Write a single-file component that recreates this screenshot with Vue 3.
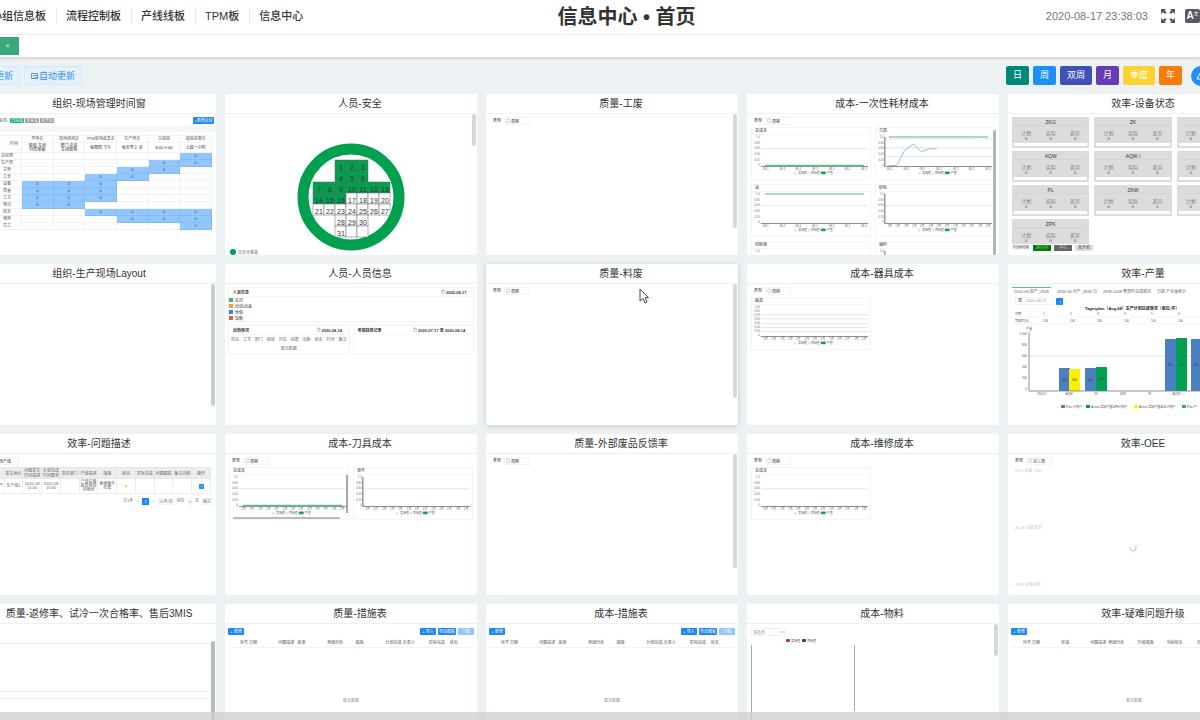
<script setup>
const nav = ['小组信息板', '流程控制板', '产线线板', 'TPM板', '信息中心']
const periods = [
  { text: '日', tone: 'teal' },
  { text: '周', tone: 'blue' },
  { text: '双周', tone: 'indigo' },
  { text: '月', tone: 'purple' },
  { text: '季度', tone: 'yellow' },
  { text: '年', tone: 'orange' }
]

const xs = (n, from = 14, to = 114) =>
  Array.from({ length: n }, (_, i) => Math.round(from + ((to - from) * i) / (n - 1)))
const chart = (title, o = {}) => ({
  title,
  n: 7,
  grid: [14],
  labels: ['1.0', '0.80', '0.60', '0.40', '0.20', '0'],
  axis: false,
  ...o
})

const cards = [
  { title: '组织-现场管理时间窗', kind: 'schedule' },
  { title: '人员-安全', kind: 'safety', bar: 'short' },
  { title: '质量-工废', kind: 'charts', charts: [], bar: 'long' },
  {
    title: '成本-一次性耗材成本',
    kind: 'charts',
    bar: 'dark',
    charts: [
      chart('总成本', { green: 31 }),
      chart('刀具', { green: 2, axis: true, grid: [4, 13, 22], line: '13,31 21,31 29,16 38,9 46,17 54,14 62,14' }),
      chart('油', { green: 2 }),
      chart('砂轮', { axis: true, n: 13 }),
      chart('切削液', {}),
      chart('辅料', { axis: true })
    ]
  },
  { title: '效率-设备状态', kind: 'status' },
  { title: '组织-生产现场Layout', kind: 'blank', bar: 'gray' },
  { title: '人员-人员信息', kind: 'people' },
  { title: '质量-料废', kind: 'charts', charts: [], bar: 'long', active: true },
  {
    title: '成本-器具成本',
    kind: 'charts',
    charts: [chart('器具', { n: 13, grid: [10, 14, 19, 23, 27], labels: ['1.00', '0.80', '0.70', '0.50', '0.40', '0.30', '0.10', '0'] })]
  },
  { title: '效率-产量', kind: 'output' },
  { title: '效率-问题描述', kind: 'issues' },
  {
    title: '成本-刀具成本',
    kind: 'charts',
    charts: [chart('总成本', { green: 31, n: 13, scroll: true }), chart('单件', { axis: true, n: 13 })]
  },
  { title: '质量-外部废品反馈率', kind: 'charts', charts: [], bar: 'long' },
  { title: '成本-维修成本', kind: 'charts', charts: [chart('总成本', { n: 13 })] },
  { title: '效率-OEE', kind: 'oee' },
  { title: '质量-返修率、试冷一次合格率、售后3MIS', kind: 'lines', bar: 'deep' },
  { title: '质量-措施表', kind: 'measures' },
  { title: '成本-措施表', kind: 'measures' },
  { title: '成本-物料', kind: 'material', bar: 'short' },
  { title: '效率-疑难问题升级', kind: 'upgrade' }
]

const slots = [
  ['早例会', '班组 车间<br>分层审核'],
  ['现场巡视会', '部门 会议<br>车间现场'],
  ['TPM现场改善会', '每周四 下午'],
  ['生产例会', '每天早上 会'],
  ['交接班', '8:00-9:00'],
  ['夜班巡查会', '上班一小时']
]
const shifts = [
  ['总经理', [6]],
  ['生产部', [5, 6]],
  ['主管', [4, 5]],
  ['工长', [3, 4]],
  ['设备', [1, 2, 3]],
  ['质量', [1, 2, 3]],
  ['工艺', [1, 2, 3]],
  ['物流', [1, 2]],
  ['班长', [3, 4, 5, 6]],
  ['维修', [4, 5, 6]],
  ['员工', [6]]
]

// calendar laid out as a cross: [row, first column, last column]
const days = []
let day = 1
for (const [r, a, b] of [[0, 2, 4], [1, 2, 4], [2, 0, 6], [3, 0, 6], [4, 0, 6], [5, 2, 4], [6, 2, 4]]) {
  for (let c = a; c <= b; c++, day++) {
    days.push({ x: 88 + c * 11, y: 46 + r * 11, n: day <= 31 ? day : '', done: day <= 16 })
  }
}

const machines = ['ZKG', 'ZK', 'ZKA', 'AQW', 'AQW I', 'AQ', 'PL', 'ZKW', 'PK', 'ZPK']
const people = [
  ['在岗', 'green'],
  ['培训/出差', 'amber'],
  ['休假', 'blue'],
  ['缺勤', 'red']
]
const roster = ['姓名', '工号', '部门', '班组', '岗位', '技能', '出勤', '状态', '时间', '备注']
const outputTabs = ['2020-08 班产_ZKW', 'ZKW 08-月产_ZKW 日', 'ZKW-2008 零部件达成情况', '日报 产出量统计']
const bars = [
  [51, 104, '#4a7fc1'], [61, 105, '#fff000'], [77, 104, '#4a7fc1'], [88, 103, '#00a04f'],
  [157, 75, '#4a7fc1'], [168, 74, '#00a04f'], [183, 75, '#4a7fc1'], [194, 74, '#00a04f']
]
const issueHead = ['序号', '项目', '发生地点', '问题发生时间描述', '计划完成时间要求', '责任部门', '产线描述', '措施', '状态', '实际完成', '问题跟踪', '备注内容', '操作']
const issueRow = ['1', '质量 生产', '生产线1', '2020-08 11:30', '2020-08 15:30', '-', '产线设备 报警停线 待维修', '更换备件 检查', '', '', '', '', '']
const measureCols = [[12, ''], [9, '序号'], [29, '日期'], [19, '问题描述'], [30, '来源'], [28, '原因分析'], [30, '措施'], [17, '计划完成'], [26, '负责人'], [21, '实际完成'], [24, '状态']]
const upgradeCols = [[12, ''], [9, '序号'], [29, '日期'], [29, '区域'], [18, '问题描述'], [29, '原因分析'], [29, '升级措施'], [30, '当前状态'], [30, '负责人'], [30, '备注']]
</script>

<template>
  <div class="page">
    <header class="top">
      <nav class="nav">
        <a v-for="n in nav" :key="n" href="#">{{ n }}</a>
      </nav>
      <h1>信息中心 • 首页</h1>
      <div class="tools">
        <time>2020-08-17 23:38:03</time>
        <button class="plain" aria-label="全屏">
          <svg width="14" height="14" viewBox="0 0 14 14" fill="#555">
            <path d="M0 0h5L3.600 1.400l2 2L4 5 2 3 0 5zM14 0v5l-2-2-2 2-1.600-1.600 2-2L9 0zM0 14V9l2 2 2-2 1.600 1.600-2 2L5 14zM14 14H9l1.400-1.400-2-2L10 9l2 2 2-2z" />
          </svg>
        </button>
        <button class="lang" aria-label="语言"><b>A</b><i>文</i></button>
      </div>
    </header>

    <div class="tabs"><button class="tab" aria-label="关闭">×</button></div>

    <main>
      <div class="bar">
        <div class="group">
          <button class="soft first">更新</button>
          <button class="soft">
            <svg width="8" height="8" viewBox="0 0 8 8" fill="none" stroke="#5b9bea"><path d="M.5 1.500h6v5h-6zM2 3.500h4M4 5.500h3.500" /></svg>自动更新
          </button>
        </div>
        <div class="group">
          <button v-for="p in periods" :key="p.text" class="period" :class="p.tone">{{ p.text }}</button>
          <button class="round" aria-label="提醒">
            <svg width="10" height="10" viewBox="0 0 10 10" fill="none" stroke="#fff"><path d="M1 8 4 2h2l3 6zM4 9.500h2" /></svg>
          </button>
        </div>
      </div>

      <div class="grid">
        <section v-for="c in cards" :key="c.title" class="card" :class="{ active: c.active }">
          <h2>{{ c.title }}</h2>
          <div class="body" :class="c.kind">
            <template v-if="c.kind === 'schedule'">
              <div class="marks">
                <span class="lead">时间标识:</span><b class="go">已完成</b><b>未完成</b><b>未开始</b>
                <button class="mini">+新增会议</button>
              </div>
              <table class="plan">
                <colgroup><col class="who"><col v-for="s in slots" :key="s[0]"></colgroup>
                <thead>
                  <tr><th rowspan="2" class="corner">时间</th><th v-for="s in slots" :key="s[0]">{{ s[0] }}</th></tr>
                  <tr class="tall"><th v-for="s in slots" :key="s[0]" v-html="s[1]"></th></tr>
                </thead>
                <tbody>
                  <tr v-for="s in shifts" :key="s[0]">
                    <th>{{ s[0] }}</th>
                    <td v-for="k in 6" :key="k" :class="{ on: s[1].includes(k) }">{{ s[1].includes(k) ? '0' : '' }}</td>
                  </tr>
                </tbody>
              </table>
            </template>

            <svg v-else-if="c.kind === 'safety'" class="fill" viewBox="0 0 252 142">
              <circle cx="126" cy="83" r="48" fill="#fff" stroke="#00a04f" stroke-width="11" />
              <g v-for="(d, i) in days" :key="i">
                <rect :x="d.x" :y="d.y" width="11" height="11" :fill="d.done ? '#00a04f' : '#fff'" stroke="#666" stroke-width=".5" />
                <text :x="d.x + 6" :y="d.y + 10" text-anchor="middle" font-size="7" fill="#333">{{ d.n }}</text>
              </g>
              <circle cx="8" cy="138" r="3" fill="#00a04f" />
              <text x="13" y="140" font-size="4" fill="#666">无安全事故</text>
            </svg>

            <template v-else-if="c.kind === 'charts'">
              <label class="filter">类型<input type="text" value="◎ 周期"></label>
              <div class="plots">
                <figure v-for="(g, gi) in c.charts" :key="gi">
                  <figcaption>{{ g.title }}</figcaption>
                  <svg class="fill" viewBox="0 0 120 44">
                    <path v-for="y in g.grid" :key="y" :d="`M9 ${y}H118`" stroke="#ddd" stroke-width=".8" />
                    <text v-for="(t, i) in g.labels" :key="i" x="8" :y="3 + (i * 29) / (g.labels.length - 1)" text-anchor="end" font-size="3" fill="#777">{{ t }}</text>
                    <path v-if="g.axis" d="M9 2V32" stroke="#666" />
                    <path d="M9 32H118" stroke="#888" />
                    <path v-if="g.green" :d="`M13 ${g.green}H114`" :stroke="g.green > 30 ? '#5fc08a' : '#8fd0a9'" stroke-width="1.500" />
                    <polyline v-if="g.line" :points="g.line" fill="none" stroke="#88c4e0" />
                    <text v-for="x in xs(g.n)" :key="x" :x="x" y="36" text-anchor="middle" font-size="3" fill="#666">{{ g.n > 7 ? '1月' : '08-1' }}</text>
                    <g font-size="3" fill="#555">
                      <circle cx="44" cy="39" r="1" fill="none" stroke="#9cd3b1" stroke-width=".5" /><text x="47" y="40">实际值</text>
                      <circle cx="58" cy="39" r="1" fill="none" stroke="#9ccbe3" stroke-width=".5" /><text x="60" y="40">目标值</text>
                      <rect x="70" y="37" width="5" height="3" rx="1" fill="#18a05c" /><text x="76" y="40">产值</text>
                    </g>
                  </svg>
                  <i v-if="g.scroll" class="vbar"></i><i v-if="g.scroll" class="hbar"></i>
                </figure>
              </div>
            </template>

            <template v-else-if="c.kind === 'status'">
              <div class="tiles">
                <div v-for="m in machines" :key="m" class="tile">
                  <h3>{{ m }}</h3>
                  <dl>
                    <div><dt>计划</dt><dd>0</dd></div>
                    <div><dt>实际</dt><dd>0</dd></div>
                    <div><dt>差异</dt><dd>0</dd></div>
                  </dl>
                  <i></i>
                </div>
              </div>
              <div class="legend"><span>时间利用</span><span class="run">运行中</span><span class="stop">停机</span><span class="idle">未开机</span></div>
            </template>

            <template v-else-if="c.kind === 'people'">
              <div class="panel wide">
                <header>人员信息<label><input aria-label="日期" value="◎ 2020-08-17"></label></header>
                <ul><li v-for="p in people" :key="p[0]"><i :class="p[1]"></i>{{ p[0] }}</li></ul>
              </div>
              <div class="panel">
                <header>出勤情况<label><input aria-label="日期" value="◎ 2020-08-14"></label></header>
                <table><thead><tr><th v-for="r in roster" :key="r">{{ r }}</th></tr></thead>
                  <tbody><tr><td colspan="10">暂无数据</td></tr></tbody></table>
              </div>
              <div class="panel">
                <header>考核缺席记录<label><input class="range" aria-label="日期范围" value="◎ 2020-07-17 至 2020-08-14"></label></header>
              </div>
            </template>

            <template v-else-if="c.kind === 'output'">
              <div class="otabs"><button v-for="t in outputTabs" :key="t">{{ t }}</button></div>
              <div class="search"><label>周<input value="2020-08-17"></label><button class="mini" aria-label="搜索">⌕</button></div>
              <svg class="fill" viewBox="0 5 252 111" font-size="3" fill="#555">
                <text x="77" y="9" font-size="4" font-weight="bold" fill="#222">Tagesplan（Aug.08）生产计划达成情况（单位:件）</text>
                <text x="7" y="14">日期</text><text x="7" y="21">完成率(%)</text>
                <path d="M4 16H252M4 23H252" stroke="#eee" stroke-width=".6" />
                <g v-for="k in 8" :key="k"><text :x="8 + k * 27" y="14">{{ k }}</text><text :x="8 + k * 27" y="21">100</text></g>
                <text x="18" y="29">产量</text>
                <path d="M21 55H252" stroke="#ddd" stroke-width=".8" />
                <text v-for="(t, i) in ['1,000', '800', '600', '400', '200', '0']" :key="t" x="19" :y="34 + i * 11" text-anchor="end">{{ t }}</text>
                <g v-for="(b, i) in bars" :key="i">
                  <rect :x="b[0]" :y="b[1] - 37" width="11" :height="127 - b[1]" :fill="b[2]" />
                  <text :x="b[0] + 3" :y="(b[1] + 55) / 2" fill="#345">{{ b[1] > 90 ? 400 : 910 }}</text>
                </g>
                <path d="M21 31V90H252" fill="none" stroke="#777" stroke-width=".8" />
                <text v-for="(t, i) in ['ZKG-C', 'AQW', 'ZK', 'ZKN', 'PL', 'AQW I', 'ZKW']" :key="t" :x="34 + i * 27" y="94" text-anchor="middle">{{ t }}</text>
                <rect x="53" y="104" width="4" height="3" fill="#4a7fc1" /><text x="58" y="107">Plan 计划产</text>
                <rect x="78" y="104" width="4" height="3" fill="#00a04f" /><text x="83" y="107">Actual 实际产量达到计划产</text>
                <rect x="126" y="104" width="4" height="3" fill="#fff000" /><text x="131" y="107">Actual 实际产量未达计划产</text>
                <rect x="174" y="104" width="4" height="3" fill="#2b9be0" /><text x="179" y="107">Plan 产</text>
              </svg>
            </template>

            <template v-else-if="c.kind === 'issues'">
              <label class="filter">产线名称及班组<input value="选择产线"></label>
              <table>
                <thead><tr><th v-for="h in issueHead" :key="h">{{ h }}</th></tr></thead>
                <tbody><tr><td v-for="(d, i) in issueRow" :key="i"><b v-if="i === 8">●</b><button v-else-if="i === 12" class="mini">✎</button><template v-else>{{ d }}</template></td></tr></tbody>
              </table>
              <div class="pager"><span>共1条</span><button>‹</button><button class="cur">1</button><button>›</button><span class="box">20条/页</span><span>前往</span><span class="box">1</span><span>页</span><span class="box">确定</span></div>
            </template>

            <template v-else-if="c.kind === 'oee'">
              <label class="filter">类型<input value="◎ 近三周"></label>
              <p>ZKG 设备 OEE</p><p>AQW 设备效率</p><p>ZKW 设备效率</p>
              <svg class="spin" width="8" height="8" viewBox="0 0 8 8" fill="none" stroke="#a9cfe0"><path d="M1 3v1a3 3 0 0 0 6 0V1" /></svg>
            </template>

            <template v-else-if="c.kind === 'measures' || c.kind === 'upgrade'">
              <div class="acts">
                <button class="mini">+ 新增</button>
                <template v-if="c.kind === 'measures'"><i></i><button class="mini">+ 导入</button><button class="mini">导出模板</button><button class="mini pale">下载</button></template>
              </div>
              <table>
                <colgroup><col v-for="(m, i) in c.kind === 'measures' ? measureCols : upgradeCols" :key="i" :style="{ width: m[0] + 'px' }"></colgroup>
                <thead><tr><th v-for="(m, i) in c.kind === 'measures' ? measureCols : upgradeCols" :key="i">{{ m[1] }}</th></tr></thead>
              </table>
              <p>暂无数据</p>
            </template>

            <template v-else-if="c.kind === 'material'">
              <label class="pick"><select aria-label="产线"><option>请选择</option></select>
                <svg width="4" height="3" viewBox="0 0 4 3" fill="none" stroke="#ccc"><path d="M0 0l2 2 2-2" /></svg></label>
              <svg class="fill" viewBox="0 0 252 90" font-size="3" fill="#444">
                <rect x="39" y="2" width="4" height="3" rx="1" fill="#c23531" /><text x="44" y="5">实际值</text>
                <rect x="55" y="2" width="4" height="3" rx="1" fill="#2f4554" /><text x="60" y="5">目标值</text>
                <path d="M4.500 8V90M107.500 8V74" stroke="#aaa" />
              </svg>
            </template>

            <template v-else-if="c.kind === 'lines'"><i></i><i></i><i></i></template>
          </div>
          <i v-if="c.bar" class="scroll" :class="c.bar"></i>
          <svg v-if="c.active" class="cursor" width="10" height="16" viewBox="0 0 10 16"><path d="M1 1v12l3-2.500 2 4.500 2-1-2-4.300h3.500z" fill="#fff" stroke="#444" /></svg>
        </section>
      </div>
    </main>
    <div class="hscroll"></div>
  </div>
</template>

<style>
body { margin: 0; overflow: hidden; }
</style>

<style scoped>
* { box-sizing: border-box; }
.page { position: relative; height: 100vh; overflow: hidden; background: #ecf1f3; color: #333; font: 4px/5px "Liberation Sans", "Noto Sans CJK SC", sans-serif; }
button, input, select { font: inherit; color: inherit; border: 0; padding: 0; margin: 0; background: none; }
h1, h2, h3, p, ul, dl, dd, figure { margin: 0; padding: 0; font-weight: normal; }
i, b { font-style: normal; }
table { border-collapse: collapse; table-layout: fixed; width: 100%; }
th, td { padding: 0; font-weight: normal; }

.top { display: grid; grid-template-columns: 1fr auto 1fr; align-items: center; height: 35px; margin-right: -53px; background: #fff; border-bottom: 1px solid #f0f0f0; }
.nav { display: flex; margin-left: -18px; font-size: 11px; line-height: 14px; font-weight: 500; white-space: nowrap; padding-bottom: 2px; }
.nav a { padding: 0 10px 0 9px; color: #333; text-decoration: none; border-left: 1px solid #e5e5e5; }
.nav a:first-child { border: 0; }
h1 { font-size: 20px; line-height: 28px; font-weight: 600; }
.tools { display: flex; justify-content: flex-end; align-items: center; padding: 0 53px 3px 0; }
.tools time { font-size: 11px; line-height: 14px; color: #777; }
.plain { display: flex; margin: 0 10px 0 13px; }
.lang { display: flex; width: 15px; height: 14px; border-radius: 2px; background: #555b62; color: #fff; justify-content: center; line-height: 14px; }
.lang b { font-size: 10px; }
.lang i { font-size: 5px; line-height: 9px; }
.tabs { height: 23px; padding-top: 2px; background: #fff; border-bottom: 1px solid #d3d7d9; box-shadow: 0 1px 2px #cfd4d6; }
.tab { width: 19px; height: 18px; background: #3aa87c; color: #d5f0e4; font-size: 8px; line-height: 18px; padding-right: 9px; text-align: right; display: block; }

.bar { display: flex; justify-content: space-between; padding: 8px 0 9px; margin-right: -11px; }
.group { display: flex; gap: 4px; height: 19px; }
.soft { display: flex; align-items: center; border: 1px solid #d3e8fb; border-radius: 2px; background: #e4f1fd; color: #2f8fe8; font-size: 9px; line-height: 12px; padding: 0 6px; }
.soft.first { margin-left: -12px; }
.period { min-width: 23px; padding: 0 7px; border-radius: 2px; color: #fff; font-size: 9px; line-height: 19px; }
.teal { background: #00897b; } .blue { background: #1e90f5; } .indigo { background: #3f51b5; }
.purple { background: #673ab7; } .yellow { background: #fdd22f; } .orange { background: #f97a05; }
.round { display: grid; place-items: center; width: 20px; height: 20px; margin-left: 5px; border-radius: 50%; background: #1e90f5; }

.grid { display: grid; grid-template-columns: repeat(5, minmax(0, 1fr)); grid-auto-rows: 161px; gap: 9px; margin: 0 -60px 0 -36px; }
.card { position: relative; display: flex; flex-direction: column; background: #fff; border-radius: 2px; min-width: 0; }
.card.active { box-shadow: 0 1px 5px #c3cace; }
.card h2 { padding-left: 18px; text-align: center; font-size: 10px; line-height: 19px; border-bottom: 1px solid #edf1f3; white-space: nowrap; }
.body { flex: 1; min-height: 0; overflow: hidden; position: relative; }
.fill { display: block; width: 100%; height: auto; }
.scroll { position: absolute; right: 1px; top: 20px; width: 4px; height: 114px; border-radius: 2px; background: #d8d8d8; }
.scroll.short { height: 32px; } .scroll.gray { height: 122px; background: #ccc; }
.scroll.dark { top: 36px; right: 3px; width: 3px; height: 125px; background: #b4b4b4; }
.scroll.deep { top: 37px; height: 124px; background: #bbb; }
.cursor { position: absolute; left: 153px; top: 24px; }
.mini { background: #1e88f0; color: #fff; border-radius: 1px; line-height: 7px; height: 7px; white-space: nowrap; }
.hscroll { position: absolute; left: 0; right: 0; bottom: 0; height: 8px; background: rgba(205, 205, 205, .75); }

.marks { display: flex; align-items: center; height: 13px; padding: 0 2px 0 27px; }
.marks .lead { width: 19px; }
.marks b { width: 14px; margin-right: 1px; background: #999; color: #fff; border-radius: 1px; text-align: center; font-weight: normal; }
.marks .go { background: #18b566; }
.marks .mini { width: 21px; margin-left: auto; }
.schedule { background: linear-gradient(#fff 12px, #f4f7f7 12px, #f4f7f7 18px, #fff 18px); }
.plan { margin: 8px 4px 0 2px; width: 246px; max-width: 98%; text-align: center; line-height: 4px; }
.plan .who { width: 55px; }
.plan th, .plan td { height: 7px; border: 1px solid #f1f3f3; color: #555; font-size: 4px; white-space: nowrap; }
.plan .tall th { height: 10px; color: #222; }
.plan .corner { background: linear-gradient(to bottom left, transparent 49%, #eee 50%, transparent 51%); text-align: right; padding-right: 3px; }
.plan td.on { background: #91c7fd; border-color: #83bbf3; color: #345; }
.plan tbody th { padding-left: 26px; }

.filter { display: flex; align-items: center; height: 13px; padding-left: 7px; gap: 3px; white-space: nowrap; }
.filter input { width: 26px; height: 8px; border: 1px solid #f3f3f3; padding-left: 1px; }
.plots { display: grid; grid-template-columns: 1fr 1fr; gap: 4px; padding: 0 4px; }
figure { position: relative; height: 53px; overflow: hidden; border: 1px solid #f5f5f5; }
figcaption { height: 7px; padding-left: 3px; line-height: 6px; border-bottom: 1px solid #f7f7f7; }
.vbar { position: absolute; right: 0; top: 7px; width: 2px; height: 38px; background: #aaa; }
.hbar { position: absolute; left: 3px; right: 8px; bottom: 0; height: 2px; background: #bbb; }

.tiles { display: grid; grid-template-columns: repeat(3, 1fr); gap: 3px 5px; padding: 3px 6px 0 4px; }
.tile { height: 31px; padding: 2px; background: #dcdcdc; text-align: center; }
.tile h3 { font-size: 5px; line-height: 6px; border-bottom: 1px solid #d4d4d4; }
.tile dl { display: grid; grid-template-columns: repeat(3, 1fr); padding-top: 4px; font-size: 5px; line-height: 6px; height: 17px; color: #777; }
.tile dd { font-size: 4px; color: #444; }
.tile i { display: block; height: 3px; background: #fff; }
.legend { position: absolute; left: 4px; right: 8px; bottom: 2px; display: flex; gap: 3px; height: 9px; padding-top: 1px; background: #fff; }
.legend span { width: 18px; height: 6px; line-height: 6px; text-align: center; white-space: nowrap; }
.legend .run { background: #008000; color: #9ecb9e; } .legend .stop { background: #666; color: #bbb; } .legend .idle { background: #ddd; }

.people { display: grid; grid-template-columns: 1fr 1fr; align-content: start; gap: 3px; padding: 3px; }
.panel { min-height: 28px; border: 1px solid #f2f3f3; min-width: 0; }
.panel.wide { grid-column: span 2; min-height: 33px; }
.panel header { display: flex; justify-content: space-between; height: 9px; line-height: 9px; padding: 0 2px 0 4px; border-bottom: 1px solid #f7f7f7; font-weight: bold; white-space: nowrap; }
.panel header input { width: 30px; height: 7px; }
.panel header input.range { width: 58px; }
.panel header label { display: flex; align-items: center; }
.panel li { display: flex; gap: 2px; height: 6px; align-items: center; list-style: none; }
.panel li i { width: 4px; height: 4px; }
.panel li .green { background: #4caf70; } .panel li .amber { background: #f0a030; } .panel li .red { background: #e05a50; }
.panel table { text-align: center; white-space: nowrap; color: #666; }
.panel th, .panel td { height: 9px; }

.otabs { display: flex; gap: 6px; margin: 3px 4px 0; height: 9px; white-space: nowrap; }
.otabs button { line-height: 8px; text-align: left; color: #666; }
.otabs button:first-child { border-top: 1px solid #5bb0d5; padding: 0 2px; }
.search { display: flex; align-items: center; height: 10px; padding-left: 7px; gap: 2px; }
.search label { display: flex; gap: 4px; padding: 0 2px; border: 1px solid #f1f1f1; line-height: 6px; }
.search input { width: 25px; height: 6px; color: #999; }
.search .mini { width: 7px; }

.issues .filter { padding-left: 0; gap: 1px; }
.issues table { width: 245px; max-width: 98%; margin-left: 2px; text-align: center; color: #666; }
.issues th { height: 10px; background: #ededed; border: 1px solid #e7e7e7; }
.issues td { height: 15px; border: 1px solid #eee; line-height: 4px; }
.issues td b { color: #f4d638; font-size: 6px; }
.issues .mini { width: 5px; height: 5px; line-height: 5px; }
.pager { display: flex; justify-content: flex-end; gap: 3px; padding: 4px; line-height: 6px; color: #777; }
.pager button { width: 3px; }
.pager .cur { width: 7px; background: #1e88f0; color: #fff; }
.pager .box { border: 1px solid #f2f2f2; line-height: 5px; }

.oee p { padding-left: 7px; height: 57px; line-height: 8px; color: #ccc; }
.spin { position: absolute; left: 121px; top: 90px; }

.measures, .upgrade { padding: 4px 3px; }
.acts { display: flex; gap: 2px; }
.acts i { flex: 1; }
.acts .mini { width: 16px; }
.acts .mini:nth-of-type(3) { width: 18px; }
.acts .pale { background: #93c6f8; }
.acts + table { margin-top: 3px; text-align: left; color: #555; }
.acts + table th { height: 9px; border-bottom: 1px solid #f3f3f3; white-space: nowrap; }
.measures p, .upgrade p { padding-top: 50px; text-align: center; color: #888; }

.pick { display: flex; align-items: center; width: 34px; height: 8px; margin: 4px 0 1px 4px; border: 1px solid #f1f1f1; color: #999; }
.pick select { appearance: none; flex: 1; height: 6px; padding-left: 1px; }
.lines i { display: block; height: 20px; border-bottom: 1px solid #f1f1f1; }
.lines i:nth-child(2) { height: 48px; }
.lines i:nth-child(3) { height: 7px; }
</style>
